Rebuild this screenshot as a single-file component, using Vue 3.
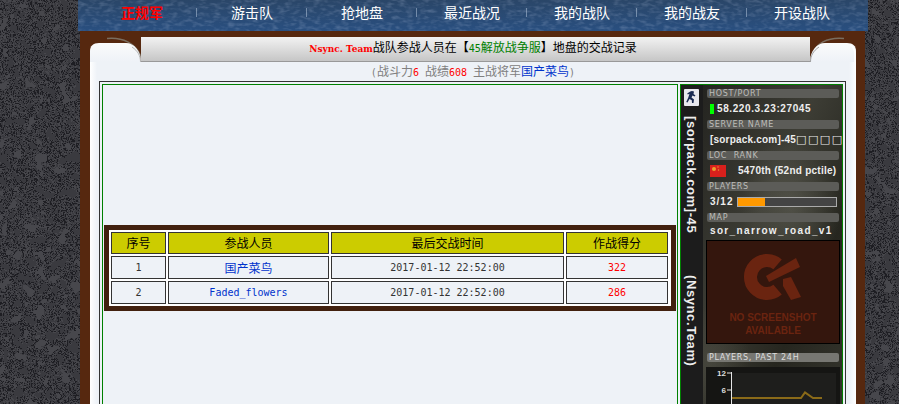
<template>
  <div class="page">
    <!-- stone wallpaper behind the site -->
    <svg class="wall" width="899" height="404">
      <filter id="wallTex" x="0" y="0" width="100%" height="100%" color-interpolation-filters="sRGB">
        <feTurbulence type="fractalNoise" baseFrequency="0.085" numOctaves="2" seed="7" />
        <feColorMatrix values="3 0 0 0 -1  3 0 0 0 -1  3 0 0 0 -1  0 0 0 0 1" />
        <feComponentTransfer>
          <feFuncR type="discrete" tableValues=".23 .23 .12 .28 .23 .23 .12 .28 .23 .23 .12 .28 .23 .23 .12 .28 .23 .23 .12 .28 .23 .23 .12 .28 .23 .23 .12 .28" />
          <feFuncG type="discrete" tableValues=".23 .23 .12 .28 .23 .23 .12 .28 .23 .23 .12 .28 .23 .23 .12 .28 .23 .23 .12 .28 .23 .23 .12 .28 .23 .23 .12 .28" />
          <feFuncB type="discrete" tableValues=".25 .25 .14 .30 .25 .25 .14 .30 .25 .25 .14 .30 .25 .25 .14 .30 .25 .25 .14 .30 .25 .25 .14 .30 .25 .25 .14 .30" />
        </feComponentTransfer>
      </filter>
      <rect width="899" height="404" filter="url(#wallTex)" />
    </svg>

    <div class="site">
      <nav class="nav">
        <svg class="nav-tex" width="790" height="31">
          <filter id="navTex" x="0" y="0" width="100%" height="100%" color-interpolation-filters="sRGB">
            <feTurbulence type="fractalNoise" baseFrequency="0.14 0.3" numOctaves="2" seed="3" />
            <feColorMatrix values="0 0 0 0 .75  0 0 0 0 .8  0 0 0 0 .9  2.4 0 0 0 -1.05" />
          </filter>
          <rect width="790" height="31" filter="url(#navTex)" opacity=".22" />
        </svg>
        <a v-for="(item, i) in navItems" :key="item" class="nav-item" :class="{ active: i === 0 }">{{ item }}</a>
      </nav>

      <div class="panel">
        <svg class="corner corner-l" width="51" height="25">
          <defs>
            <linearGradient id="tileL" x1="0" y1="0" x2="0" y2="1">
              <stop offset="0" stop-color="#fbfbfb" />
              <stop offset="1" stop-color="#eef2f7" />
            </linearGradient>
          </defs>
          <rect width="51" height="25" fill="#56280f" />
          <path d="M17 1.500C32 0 46 6 51 20" fill="none" stroke="#8a8a80" stroke-width="1.500" opacity=".7" />
          <path d="M0 14C0 9 3 6 9 6H36C44 6 51 14 51 25H0Z" fill="url(#tileL)" />
          <path d="M42 10C48 14 50.500 19 50.500 25" fill="none" stroke="#b5b5b5" stroke-width="1" />
        </svg>
        <svg class="corner corner-r" width="46" height="25">
          <defs>
            <linearGradient id="tileR" x1="0" y1="0" x2="0" y2="1">
              <stop offset="0" stop-color="#fbfbfb" />
              <stop offset="1" stop-color="#eef2f7" />
            </linearGradient>
          </defs>
          <rect width="46" height="25" fill="#56280f" />
          <path d="M34 1.500C18 0 5 6 1 20" fill="none" stroke="#8a8a80" stroke-width="1.500" opacity=".7" />
          <path d="M46 14C46 9 43 6 37 6H15C7 6 0 14 0 25H46Z" fill="url(#tileR)" />
          <path d="M9 10C3 14 .5 19 .5 25" fill="none" stroke="#a0a0a0" stroke-width="1" />
          <path d="M40 8C44 10 45 13 45 18V25" fill="none" stroke="#fff" stroke-width="1.500" />
        </svg>

        <div class="band">
          <span class="team">Nsync. Team</span>战队参战人员在【<span class="server"><span class="num">45</span>解放战争服</span>】地盘的交战记录
        </div>
        <div class="info">
          <span class="num">(</span>战斗力<span class="red num">6 </span>战绩<span class="red num">608 </span>主战将军<span class="blue">国产菜鸟</span><span class="num">)</span>
        </div>

        <div class="outer">
          <div class="left-cell">
            <div class="frame">
              <table class="records">
                <thead>
                  <tr>
                    <th class="c1">序号</th>
                    <th class="c2">参战人员</th>
                    <th class="c3">最后交战时间</th>
                    <th class="c4">作战得分</th>
                  </tr>
                </thead>
                <tbody>
                  <tr v-for="row in rows" :key="row.no">
                    <td class="num">{{ row.no }}</td>
                    <td class="blue" :class="{ num: row.latin }">{{ row.name }}</td>
                    <td class="num">{{ row.time }}</td>
                    <td class="num red">{{ row.score }}</td>
                  </tr>
                </tbody>
              </table>
            </div>
          </div>

          <div class="right-cell">
            <div class="banner">
              <div class="strip">
                <svg class="cs-icon" width="15" height="17" viewBox="0 0 15 17">
                  <rect width="15" height="17" rx="1" fill="#e8e8ee" />
                  <path d="M8 2l2 .5-.5 2.5 2 1.5-1 1-2-1-1 2 2.5 2-.5 3.5h-1.5l-.2-2.8-2.3-1.2-2 3.6-1.3-.6 2-4.3 1.3-4-1.7.8-.6-1 3-2Z" fill="#1a2a52" />
                </svg>
                <span class="strip-text first">[sorpack.com]-45</span>
                <span class="strip-text second">(Nsync.Team)</span>
              </div>
              <div class="stats">
                <div class="label">HOST/PORT</div>
                <div class="value host"><i class="online"></i>58.220.3.23:27045</div>
                <div class="label">SERVER NAME</div>
                <div class="value name">[sorpack.com]-45<span class="tofu">□□□□</span></div>
                <div class="label">LOC&nbsp;&nbsp;RANK</div>
                <div class="value">
                  <svg class="flag" width="16" height="12" viewBox="0 0 16 12">
                    <rect width="16" height="12" fill="#d8201c" />
                    <circle cx="4" cy="4" r="2" fill="#e8a030" />
                    <circle cx="8" cy="2" r=".7" fill="#e8a030" />
                    <circle cx="8.5" cy="5" r=".7" fill="#e8a030" />
                  </svg>
                  <span class="rank">5470th (52nd pctile)</span>
                </div>
                <div class="label">PLAYERS</div>
                <div class="value">3/12<span class="bar"><span class="fill" :style="{ width: fillPct + '%' }"></span></span></div>
                <div class="label">MAP</div>
                <div class="value map">sor_narrow_road_v1</div>
                <div class="shot">
                  <svg class="logo" width="132" height="70" viewBox="0 0 132 70">
                    <path d="M70.6 23.4A16.5 16.5 0 1 0 70.6 48.6" fill="none" stroke="#6a2410" stroke-width="13" />
                    <path d="M59 35L89 17 93 26 62 41Z" fill="#6a2410" />
                    <path d="M76 38L84 36 94 56 84 59 76 45Z" fill="#6a2410" />
                  </svg>
                  <div class="shot-text">NO SCREENSHOT<br />AVAILABLE</div>
                </div>
                <div class="label wide">PLAYERS, PAST 24H</div>
                <div class="graph">
                  <svg width="134" height="40" viewBox="0 0 134 40">
                    <rect x="26" y="6" width="104" height="34" fill="#1e1e1c" />
                    <text x="20" y="9" class="tick">12</text>
                    <text x="20" y="26" class="tick">6</text>
                    <path d="M25.500 5V40M21 6H26M21 23H26" stroke="#e6e6e6" stroke-width="1" fill="none" />
                    <path d="M26 31H95L99 25.500 107 31H116" stroke="#8a6a18" stroke-width="2" fill="none" />
                  </svg>
                </div>
              </div>
            </div>
          </div>
        </div>
      </div>
    </div>
  </div>
</template>

<script setup>
const navItems = ['正规军', '游击队', '抢地盘', '最近战况', '我的战队', '我的战友', '开设战队']

const rows = [
  { no: 1, name: '国产菜鸟', latin: false, time: '2017-01-12 22:52:00', score: 322 },
  { no: 2, name: 'Faded_flowers', latin: true, time: '2017-01-12 22:52:00', score: 286 }
]

const fillPct = 27
</script>

<style>
html, body {
  margin: 0;
  background: #333238;
  overflow: hidden;
}
</style>

<style scoped>
.page {
  position: relative;
  width: 899px;
  height: 404px;
  overflow: hidden;
  font-family: "Noto Sans CJK SC", "Liberation Sans", sans-serif;
  font-size: 12px;
  line-height: 16px;
  color: #000;
}

.wall {
  position: absolute;
  left: 0;
  top: 0;
}

.site {
  position: relative;
  margin-left: 80px;
  width: 785px;
  height: 404px;
  background: #56280f;
}

.nav {
  position: relative;
  display: flex;
  margin-left: -2px;
  width: 790px;
  height: 31px;
  padding-left: 9px;
  box-sizing: border-box;
  background: linear-gradient(#2a4668, #294f80);
}

.nav-tex {
  position: absolute;
  left: 0;
  top: 0;
}

.nav-item {
  position: relative;
  width: 110px;
  height: 31px;
  line-height: 24px;
  text-align: center;
  font-size: 14px;
  color: #fff;
}

.nav-item:not(:last-child)::after {
  content: "";
  position: absolute;
  right: 0;
  top: 8px;
  height: 9px;
  border-right: 1px solid rgba(190, 205, 225, .5);
}

.nav-item.active {
  color: #f00;
  font-weight: 700;
}

.panel {
  position: relative;
  margin: 6px 9px 0 10px;
  height: 367px;
  background: linear-gradient(90deg, #fff, #eef2f7 7px, #eef2f7 calc(100% - 7px), #fff);
}

.corner {
  position: absolute;
  top: 0;
}

.corner-l {
  left: 0;
}

.corner-r {
  right: 0;
}

.band {
  height: 24px;
  line-height: 20px;
  text-align: center;
  background: linear-gradient(#f2f2f2, #c6c6c6);
  border-bottom: 1px solid #999;
}

.team {
  font-family: "DejaVu Serif", serif;
  font-size: 9px;
  font-weight: 700;
  color: #f00;
}

.server {
  color: #008000;
}

.num {
  font-family: "DejaVu Sans Mono", monospace;
  font-size: 10px;
}

.info {
  height: 19px;
  line-height: 18px;
  text-align: center;
  color: #808080;
}

.red {
  color: #f00;
}

.blue {
  color: #0033cc;
}

.outer {
  display: flex;
  gap: 2px;
  margin-left: 9px;
  width: 747px;
  height: 400px;
  padding: 2px;
  box-sizing: border-box;
  border: 1px solid #333;
}

.left-cell {
  display: flex;
  align-items: flex-start;
  justify-content: center;
  width: 576px;
  height: 400px;
  box-sizing: border-box;
  padding: 140px 1px 0;
  border: 1px solid #008000;
}

.frame {
  box-sizing: border-box;
  width: 572px;
  height: 86px;
  border: 5px solid #42210f;
  background: #fff;
}

.records {
  width: 561px;
  border-collapse: separate;
  border-spacing: 2px;
  table-layout: fixed;
  background: #fff;
}

.records th,
.records td {
  box-sizing: border-box;
  padding: 0;
  text-align: center;
  border: 1px solid #333;
  background: #eef2f7;
  font-weight: 400;
  color: #333;
}

.records td.blue {
  color: #0033cc;
}

.records td.red {
  color: #f00;
}

.records th {
  height: 22px;
  background: #cc0;
  color: #000;
}

.records td {
  height: 23px;
}

.c1 { width: 55px; }
.c2 { width: 161px; }
.c3 { width: 233px; }
.c4 { width: 102px; }

.right-cell {
  width: 165px;
  height: 400px;
  box-sizing: border-box;
  border: 1px solid #008000;
}

.banner {
  display: flex;
  height: 398px;
  background:
    radial-gradient(ellipse 50px 70px at 110px 120px, rgba(95, 95, 85, .65), transparent),
    radial-gradient(ellipse 40px 60px at 30px 280px, rgba(80, 80, 70, .55), transparent),
    linear-gradient(115deg, #1f1f1c, #3d3d35 40%, #26261f 65%, #3a3a32);
}

.strip {
  display: flex;
  flex-direction: column;
  align-items: center;
  width: 22px;
  padding: 4px 2px 0 0;
  box-sizing: border-box;
  background: #1c1c1c;
}

.cs-icon {
  flex: none;
}

.strip-text {
  writing-mode: vertical-rl;
  font-family: "Liberation Sans", sans-serif;
  font-size: 13px;
  font-weight: 700;
  line-height: 16px;
  letter-spacing: .6px;
  color: #eee;
}

.strip-text.first {
  margin-top: 10px;
}

.strip-text.second {
  margin-top: 42px;
}

.stats {
  display: flex;
  flex-direction: column;
  width: 134px;
  margin-left: 3px;
  padding-top: 4px;
}

.label {
  height: 9px;
  width: 132px;
  margin-left: 1px;
  line-height: 9px;
  padding-left: 2px;
  box-sizing: border-box;
  border-radius: 2px;
  font-family: "DejaVu Sans", sans-serif;
  font-size: 8px;
  letter-spacing: .7px;
  color: #bdbdb8;
  background: #5c5c58;
  white-space: nowrap;
}

.label.wide {
  margin-top: 9px;
  background: #777772;
  color: #ddd;
}

.value {
  display: flex;
  align-items: center;
  height: 22px;
  padding-left: 4px;
  font-family: "Liberation Sans", sans-serif;
  font-size: 10px;
  font-weight: 700;
  letter-spacing: 1px;
  color: #eee;
  white-space: nowrap;
}

.value.host {
  letter-spacing: .6px;
}

.value.name {
  letter-spacing: .2px;
}

.tofu {
  font-family: "DejaVu Sans", sans-serif;
  font-size: 11px;
  font-weight: 400;
  letter-spacing: 1.5px;
}

.value.map {
  height: 18px;
  letter-spacing: 1.35px;
}

.online {
  width: 4px;
  height: 10px;
  margin-right: 3px;
  background: #0f0;
}

.flag {
  flex: none;
}

.rank {
  margin-left: 12px;
  letter-spacing: .25px;
}

.bar {
  width: 98px;
  height: 8px;
  margin-left: 4px;
  border: 1px solid #aaa;
  background: #444;
}

.fill {
  display: block;
  height: 100%;
  background: #f90;
}

.shot {
  box-sizing: border-box;
  width: 134px;
  height: 104px;
  border: 1px solid #000;
  background: #34160d;
  text-align: center;
  font-family: "Liberation Sans", sans-serif;
  font-size: 10px;
  font-weight: 700;
  line-height: 13px;
  color: #6a2410;
}

.logo {
  display: block;
}

.shot-text {
  margin-top: 0;
}

.graph {
  margin-top: 5px;
  background: #151513;
}

.graph svg {
  display: block;
}

.tick {
  font-family: "Liberation Sans", sans-serif;
  font-size: 8px;
  font-weight: 700;
  fill: #ddd;
  text-anchor: end;
}
</style>
